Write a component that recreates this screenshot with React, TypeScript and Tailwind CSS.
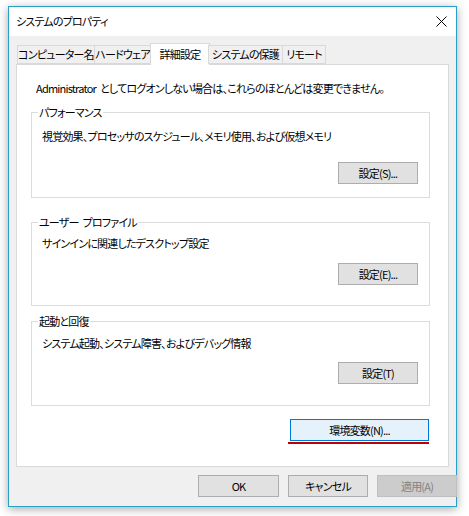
const jp = "font-['Meiryo_UI','Noto_Sans_CJK_JP',sans-serif] [font-feature-settings:'palt'] whitespace-nowrap";
const txt = 'text-[11px] tracking-[-0.8px]';

function Sp() {
  return <span className="inline-block w-[4px]" />;
}

function Btn({ label, w = 'w-[80px]', kind = 'normal' }: { label: string; w?: string; kind?: 'normal' | 'focus' | 'disabled' }) {
  const tone =
    kind === 'focus'
      ? 'bg-[#e5f1fb] border-[#0078d7] text-black'
      : kind === 'disabled'
        ? 'bg-[#cccccc] border-[#bfbfbf] text-[#838383]'
        : 'bg-[#e1e1e1] border-[#adadad] text-black';
  return (
    <div className={`${w} h-[22px] shrink-0 border flex items-center justify-center ${txt} leading-none ${tone}`}>{label}</div>
  );
}

function Group({ title, text, button, h, pt, mt }: { title: React.ReactNode; text: string; button: string; h: string; pt: string; mt: string }) {
  return (
    <div className={`relative border border-[#dcdcdc] ${h} flex flex-col`}>
      <span className={`absolute left-[6px] -top-[9px] bg-white px-[1px] ${txt} leading-[16px]`}>{title}</span>
      <div className={`${pt} pl-[10px] ${txt} leading-[16px]`}>{text}</div>
      <div className={`${mt} self-end mr-[11px]`}>
        <Btn label={button} />
      </div>
    </div>
  );
}

export default function App() {
  const tabs = [
    { label: 'コンピューター名', w: 'w-[78px]' },
    { label: 'ハードウェア', w: 'w-[57px]' },
    { label: '詳細設定', w: 'w-[60px]', active: true },
    { label: 'システムの保護', w: 'w-[75px]' },
    { label: 'リモート', w: 'w-[44px]' },
  ];

  return (
    <div className={`w-[469px] h-[516px] bg-white pl-[8px] pt-[6px] text-black ${jp}`}>
      <div className="w-[449px] h-[501px] border border-[#2a9fc5] shadow-[0_2px_9px_rgba(0,0,0,0.35)] flex flex-col">
        {/* title bar */}
        <div className="h-[29px] shrink-0 bg-white flex items-center justify-between pl-[7px] pr-[8px]">
          <span className={`${txt} leading-none`}>システムのプロパティ</span>
          <svg width="11" height="11" viewBox="0 0 11 11" className="mr-[1px]">
            <path d="M0.5 0.5L10.5 10.5M10.5 0.5L0.5 10.5" stroke="#000" strokeWidth="1" />
          </svg>
        </div>

        {/* body */}
        <div className="flex-1 bg-[#f0f0f0] pl-[7px] pt-[7px] flex flex-col">
          <div className="flex items-end h-[21px] shrink-0 pl-[1px] relative z-10">
            {tabs.map((t, i) =>
              t.active ? (
                <div
                  key={i}
                  className={`${t.w} h-[22px] -mx-[1px] -mb-px bg-white border border-b-0 border-[#d9d9d9] flex items-center justify-center ${txt} leading-none pb-[1px]`}
                >
                  {t.label}
                </div>
              ) : (
                <div
                  key={i}
                  className={`${t.w} h-[19px] bg-[#f0f0f0] border border-[#d9d9d9] -ml-px first:ml-0 flex items-center justify-center ${txt} leading-none`}
                >
                  {t.label}
                </div>
              )
            )}
          </div>

          <div className="w-[433px] h-[403px] shrink-0 bg-white border border-[#d9d9d9] flex flex-col">
            <div className={`pt-[15px] pl-[19px] ${txt} leading-[16px]`}>
              Administrator<Sp />としてログオンしない場合は、これらのほとんどは変更できません。
            </div>
            <div className="w-[399px] ml-[14px] mt-[16px] flex flex-col">
              <Group title="パフォーマンス" text="視覚効果、プロセッサのスケジュール、メモリ使用、および仮想メモリ" button="設定(S)..." h="h-[86px]" pt="pt-[15px]" mt="mt-[18px]" />
              <div className="mt-[24px]">
                <Group title={<>ユーザー<Sp />プロファイル</>} text="サインインに関連したデスクトップ設定" button="設定(E)..." h="h-[84px]" pt="pt-[12px]" mt="mt-[12px]" />
              </div>
              <div className="mt-[15px]">
                <Group title="起動と回復" text="システム起動、システム障害、およびデバッグ情報" button="設定(T)" h="h-[85px]" pt="pt-[13px]" mt="mt-[11px]" />
              </div>
              <div className="self-end mt-[13px] mr-px flex flex-col items-end">
                <Btn label="環境変数(N)..." w="w-[139px]" kind="focus" />
                <div className="w-[141px] h-[2px] mt-px bg-[#c00000]" />
              </div>
            </div>
          </div>

          <div className="flex justify-end gap-[9px] pr-[6px] mt-[8px] w-[447px]">
            <Btn label="OK" w="w-[81px]" />
            <Btn label="キャンセル" w="w-[80px]" />
            <Btn label="適用(A)" w="w-[80px]" kind="disabled" />
          </div>
        </div>
      </div>
    </div>
  );
}
